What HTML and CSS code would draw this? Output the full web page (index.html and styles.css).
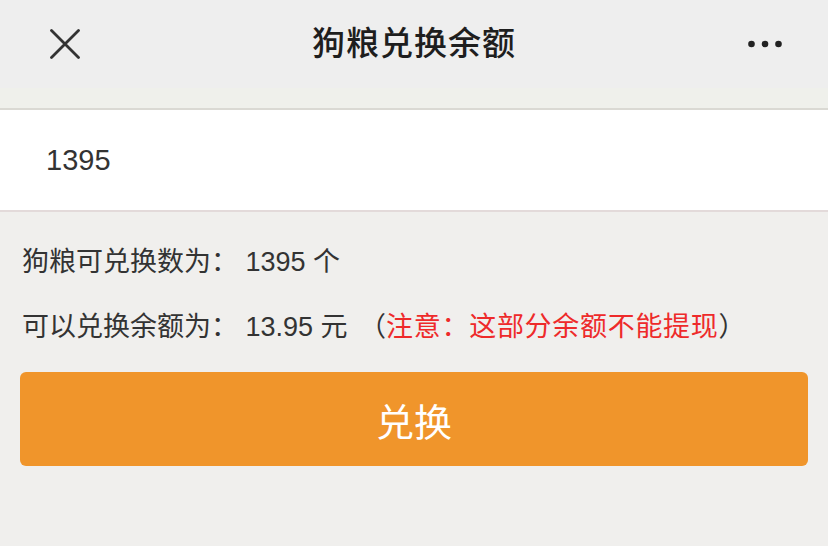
FILE: index.html
```html
<!DOCTYPE html>
<html lang="zh">
<head>
<meta charset="utf-8">
<title>狗粮兑换余额</title>
<link rel="stylesheet" href="styles.css">
</head>
<body>
<header class="nav">
  <div class="nav-left">
    <svg class="icon-close" width="30" height="30" viewBox="0 0 30 30">
      <path d="M1.5 1.5 L28.5 28.5 M28.5 1.5 L1.5 28.5" stroke="#333" stroke-width="2.8" stroke-linecap="round" fill="none"/>
    </svg>
  </div>
  <h1 class="nav-title">狗粮兑换余额</h1>
  <div class="nav-right">
    <svg class="icon-more" width="34" height="8" viewBox="0 0 34 8">
      <circle cx="3.5" cy="4" r="3.3" fill="#222"/>
      <circle cx="17" cy="4" r="3.3" fill="#222"/>
      <circle cx="30.5" cy="4" r="3.3" fill="#222"/>
    </svg>
  </div>
</header>
<div class="band"></div>
<div class="field">1395</div>
<div class="info">
  <p class="line">狗粮可兑换数为： 1395 个</p>
  <p class="line">可以兑换余额为： 13.95 元 <span class="paren">（</span><span class="warn">注意：这部分余额不能提现</span>）</p>
</div>
<button class="btn">兑换</button>
</body>
</html>
```
FILE: styles.css
```css
html, body {
  margin: 0;
  padding: 0;
}
body {
  width: 828px;
  height: 546px;
  overflow: hidden;
  background: #f0efed;
  font-family: "Liberation Sans", "Noto Sans CJK SC", sans-serif;
  color: #333;
}
.nav {
  height: 88px;
  background: #eeeeee;
  display: grid;
  grid-template-columns: 1fr auto 1fr;
  align-items: center;
}
.nav-left {
  padding-left: 50px;
  display: flex;
  align-items: center;
}
.nav-right {
  display: flex;
  justify-content: flex-end;
  padding-right: 46px;
}
.icon-close, .icon-more {
  display: block;
}
.nav-title {
  margin: 0;
  font-size: 33px;
  font-weight: 500;
  color: #1e1e1e;
  letter-spacing: 1px;
  line-height: 40px;
}
.band {
  height: 20px;
  background: #eff0eb;
  border-bottom: 2px solid #dad9d3;
}
.field {
  height: 100px;
  background: #fff;
  border-bottom: 2px solid #e3dada;
  padding-left: 46px;
  display: flex;
  align-items: center;
  font-size: 29px;
  color: #333;
}
.info {
  padding: 18px 22px 0;
}
.line {
  margin: 0;
  font-size: 27px;
  line-height: 65px;
  color: #333;
  white-space: nowrap;
}
.paren {
  margin-left: 4px;
}
.warn {
  color: #ee2a2a;
  letter-spacing: 0.7px;
}
.btn {
  display: flex;
  align-items: center;
  justify-content: center;
  width: 788px;
  height: 94px;
  margin: 12px 20px 0;
  padding: 0;
  border: none;
  border-radius: 6px;
  background: #f0952b;
  color: #fff;
  font-family: "Liberation Sans", "Noto Sans CJK SC", sans-serif;
  font-size: 38px;
  font-weight: 400;
}
```
